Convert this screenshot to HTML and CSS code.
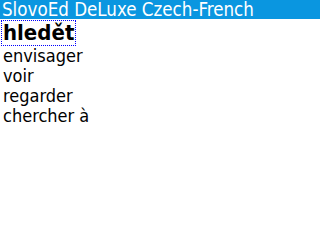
FILE: index.html
```html
<!DOCTYPE html>
<html lang="cs">
  <head>
    <meta charset="UTF-8" />
    <title>SlovoEd DeLuxe Czech-French</title>
    <link rel="stylesheet" href="styles.css">
  </head>
  <body>
    <div class="title-bar">SlovoEd DeLuxe Czech-French</div>
    <div class="entry">
      <div class="headword">hledět</div>
      <div class="translation">envisager</div>
      <div class="translation">voir</div>
      <div class="translation">regarder</div>
      <div class="translation">chercher à</div>
    </div>
  </body>
</html>
```

FILE: styles.css
```css
body {
  margin: 0;
  padding: 0;
  width: 320px;
  height: 240px;
  background-color: #fff;
  font-family: "DejaVu Sans Condensed", "DejaVu Sans", sans-serif;
  color: #000;
}
.title-bar {
  height: 19px;
  line-height: 19px;
  padding-left: 2px;
  background-color: #0a96e0;
  color: #fff;
  font-size: 18.6px;
  white-space: nowrap;
  overflow: hidden;
}
.entry {
  padding: 1px 0 0 1px;
}
.headword {
  width: fit-content;
  height: 24px;
  font-size: 22px;
  font-weight: bold;
  line-height: 24px;
  padding: 0 1px;
  border: 1px dotted #0000ff;
}
.translation {
  font-size: 18px;
  line-height: 20px;
  padding-left: 2px;
}
```
